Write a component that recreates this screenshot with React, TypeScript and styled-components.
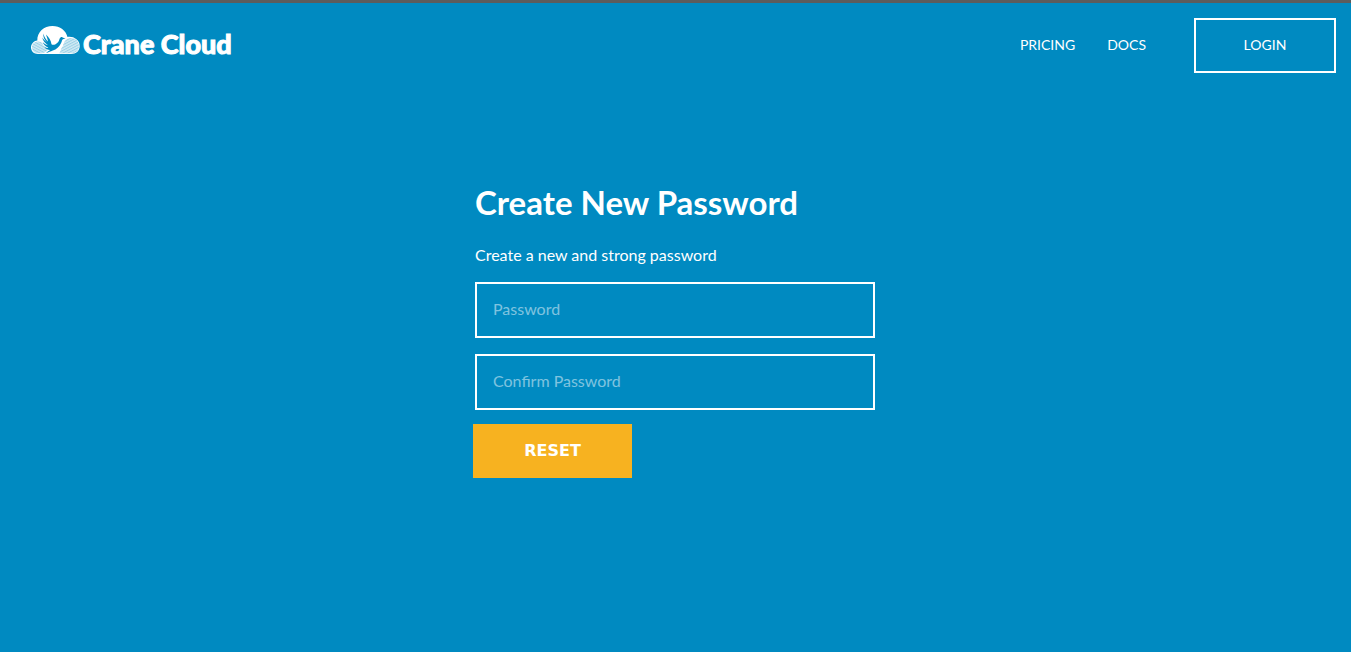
import React from "react";
import styled, { createGlobalStyle } from "styled-components";

const blue = "#008ac1";
const fontStack = '"Proxima Nova", Lato, "Open Sans", sans-serif';

const GlobalStyle = createGlobalStyle`
  *, *::before, *::after { box-sizing: border-box; }
  body {
    margin: 0;
    background: ${blue};
    color: #fff;
    font-family: ${fontStack};
    font-size: 16px;
  }
`;

const Page = styled.div`
  min-height: 100vh;
  border-top: 3px solid #5c5c5c;
`;

const Header = styled.header`
  display: flex;
  align-items: center;
  justify-content: space-between;
  padding: 15px 15px 0 31px;
`;

const Brand = styled.a`
  display: flex;
  align-items: center;
  gap: 3px;
  margin-bottom: 12px;
  color: #fff;
  text-decoration: none;
`;

const BrandName = styled.span`
  font-size: 27px;
  line-height: 26px;
  font-weight: 900;
  padding-top: 8px;
  -webkit-text-stroke: 1px #fff;
`;

const Nav = styled.nav`
  display: flex;
  align-items: center;
  gap: 32px;
`;

const NavLink = styled.a`
  padding-bottom: 2px;
  color: #fff;
  font-size: 14px;
  line-height: 20px;
  text-decoration: none;
`;

const LoginLink = styled(NavLink)`
  margin-left: 16px;
  width: 142px;
  height: 55px;
  padding: 15px 0 16px;
  border: 2px solid #fff;
  text-align: center;
`;

const Main = styled.main`
  padding: 109px 1px 0 0;
`;

const Form = styled.form`
  display: flex;
  flex-direction: column;
  width: 400px;
  max-width: 100%;
  margin: 0 auto;
`;

const Title = styled.h1`
  margin: 0;
  font-size: 33px;
  line-height: 40px;
  font-weight: 700;
`;

const Hint = styled.p`
  margin: 23px 0 17px;
  line-height: 20px;
`;

const Field = styled.input`
  width: 100%;
  height: 56px;
  margin-bottom: 16px;
  padding: 0 16px 3px;
  border: 2px solid #fff;
  border-radius: 0;
  background: transparent;
  color: #fff;
  font-family: inherit;
  font-size: 16px;
  &::placeholder { color: rgba(255, 255, 255, 0.5); opacity: 1; }
`;

const ResetButton = styled.button`
  width: 159px;
  height: 54px;
  margin: -2px 0 0 -2px;
  padding: 0 0 2px;
  border: 0;
  background: #f7b220;
  color: #fff;
  font-family: "DejaVu Sans", sans-serif;
  font-size: 16px;
  font-weight: 700;
`;

const Logo = () => (
  <svg width="49" height="28" viewBox="0 0 49 28" aria-hidden="true">
    <defs>
      <pattern id="hatch" width="2.4" height="2.4" patternUnits="userSpaceOnUse" patternTransform="rotate(28)">
        <rect width="2.4" height="2.4" fill="#d0eaf4" />
        <rect width="2.4" height="1" fill="#9bd0e6" />
      </pattern>
      <pattern id="hatchRight" width="2.4" height="2.4" patternUnits="userSpaceOnUse" patternTransform="rotate(-28)">
        <rect width="2.4" height="2.4" fill="#d0eaf4" />
        <rect width="2.4" height="1" fill="#9bd0e6" />
      </pattern>
    </defs>
    <path
      fill="#fff"
      d="M7 28C3 28 0 25.200 0 21.500C0 18 2.500 15 6.300 14.500C6 6 13 0 21.500 0C29 0 35 4.500 36.500 11C42 10 48.700 13.500 48.700 20C48.700 25 45 28 40 28Z"
    />
    <path fill="url(#hatch)" d="M1 21C1 17.500 4 15.200 7.500 15.400C10.500 15.500 12 17.500 12.300 19.600C14.500 20.200 16 22 16.500 24C15 26 13 27.200 10.500 27.200H7C3.500 27.200 1 24.500 1 21Z" />
    <path fill="url(#hatchRight)" d="M28 27.200C30 26 29.500 22.500 32 20C33 15 35.500 12 40 12C44.500 12 48 15.500 48 20C48 24.500 45 27.200 40 27.200Z" />
    <path
      fill={blue}
      d="M12.500 7.500C13 11 15 13.500 17 15.500C16.700 12.500 15.500 10.500 15 8.500C18 11.500 20 14.500 20.500 18.300C22 19.500 25 18.500 27 16.200C28.500 14.500 28 12.500 29.500 11.400C30.500 10.700 31.500 11 32 11.700L34.500 12.200L32 13.300C30.800 13.800 31 15.500 30 17.300C28.300 20.800 25.500 23.500 21.800 24.600C19.500 25.400 17.700 26.400 15 27C16.800 25.600 18 25 19 24C17 24 14.900 23 13.500 21.300C15 21.800 16.500 22 17.500 21.800C15 20.700 12.500 18.900 11.700 16.300C13.500 17.900 15 18.700 17 19.300C14 17.200 11.700 14.800 11.300 11.600C13 14 14.600 15.500 16.200 16.600C13.500 14 11.800 11 12.500 7.500Z"
    />
  </svg>
);

export default function App() {
  return (
    <Page>
      <GlobalStyle />
      <Header>
        <Brand href="#">
          <Logo />
          <BrandName>Crane Cloud</BrandName>
        </Brand>
        <Nav>
          <NavLink href="#pricing">PRICING</NavLink>
          <NavLink href="#docs">DOCS</NavLink>
          <LoginLink href="#login">LOGIN</LoginLink>
        </Nav>
      </Header>
      <Main>
        <Form onSubmit={(event) => event.preventDefault()}>
          <Title>Create New Password</Title>
          <Hint>Create a new and strong password</Hint>
          <Field type="password" placeholder="Password" aria-label="Password" />
          <Field type="password" placeholder="Confirm Password" aria-label="Confirm Password" />
          <ResetButton type="submit">RESET</ResetButton>
        </Form>
      </Main>
    </Page>
  );
}
